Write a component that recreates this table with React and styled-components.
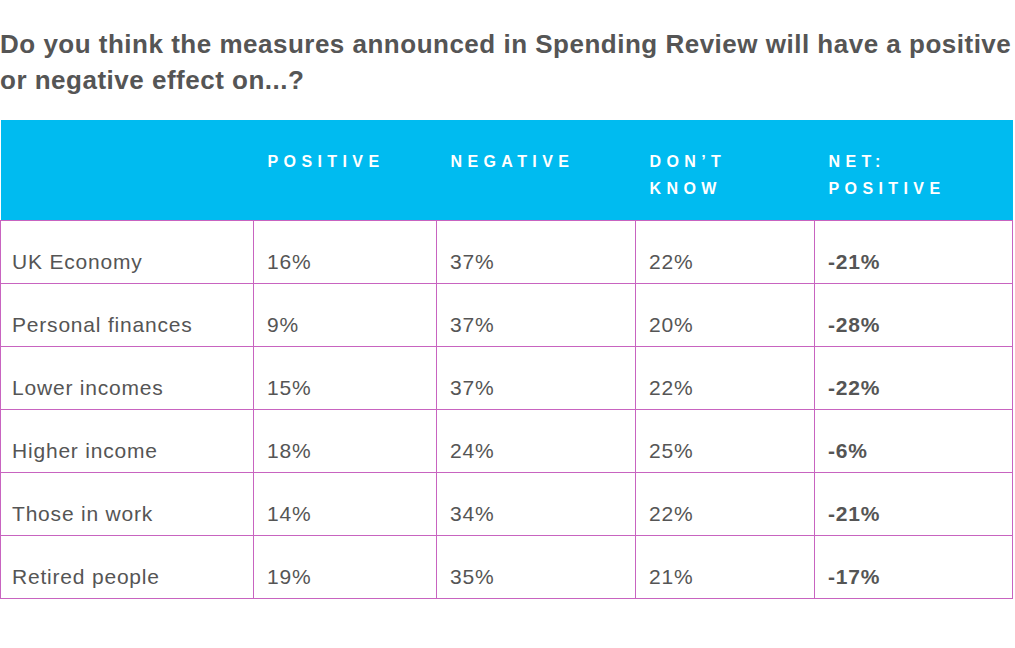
import styled, { createGlobalStyle } from "styled-components";

const GlobalStyle = createGlobalStyle`
  body {
    margin: 0;
    background: #ffffff;
    font-family: "Liberation Sans", Arial, sans-serif;
  }
`;

const rows = [
  { label: "UK Economy", positive: "16%", negative: "37%", dontKnow: "22%", net: "-21%" },
  { label: "Personal finances", positive: "9%", negative: "37%", dontKnow: "20%", net: "-28%" },
  { label: "Lower incomes", positive: "15%", negative: "37%", dontKnow: "22%", net: "-22%" },
  { label: "Higher income", positive: "18%", negative: "24%", dontKnow: "25%", net: "-6%" },
  { label: "Those in work", positive: "14%", negative: "34%", dontKnow: "22%", net: "-21%" },
  { label: "Retired people", positive: "19%", negative: "35%", dontKnow: "21%", net: "-17%" },
];

export default function App() {
  return (
    <Page>
      <GlobalStyle />
      <Title>
        Do you think the measures announced in Spending Review will have a positive or negative effect on...?
      </Title>
      <Table>
        <colgroup>
          <col style={{ width: 253 }} />
          <col style={{ width: 183 }} />
          <col style={{ width: 199 }} />
          <col style={{ width: 179 }} />
          <col />
        </colgroup>
        <thead>
          <tr>
            <HeadCell />
            <HeadCell>POSITIVE</HeadCell>
            <HeadCell>NEGATIVE</HeadCell>
            <HeadCell>DON’T<br />KNOW</HeadCell>
            <HeadCell>NET:<br />POSITIVE</HeadCell>
          </tr>
        </thead>
        <tbody>
          {rows.map((r) => (
            <tr key={r.label}>
              <Cell $first>{r.label}</Cell>
              <Cell>{r.positive}</Cell>
              <Cell>{r.negative}</Cell>
              <Cell>{r.dontKnow}</Cell>
              <Cell $bold>{r.net}</Cell>
            </tr>
          ))}
        </tbody>
      </Table>
    </Page>
  );
}

const Page = styled.div`
  width: 1015px;
  padding-top: 26px;
`;

const Title = styled.h1`
  margin: 0 0 22px 0;
  padding-right: 2px;
  font-family: "Liberation Sans", Arial, sans-serif;
  font-size: 26px;
  line-height: 36px;
  font-weight: 700;
  letter-spacing: 0.5px;
  color: #555555;
`;

const Table = styled.table`
  width: 1013px;
  border-collapse: collapse;
  table-layout: fixed;
`;

const HeadCell = styled.th`
  height: 100px;
  padding: 28px 14px 0 14px;
  background: #00bbf0;
  color: #ffffff;
  text-align: left;
  vertical-align: top;
  font-family: "Liberation Sans", Arial, sans-serif;
  font-size: 16px;
  line-height: 27px;
  font-weight: 700;
  letter-spacing: 5.4px;
  box-sizing: border-box;
`;

const Cell = styled.td`
  height: 63px;
  padding: 0 0 9px ${({ $first }) => ($first ? "11px" : "13px")};
  border: 1px solid #c864c0;
  vertical-align: bottom;
  font-family: "Liberation Sans", Arial, sans-serif;
  font-size: 21px;
  line-height: 24px;
  font-weight: ${({ $bold }) => ($bold ? 700 : 400)};
  letter-spacing: 0.8px;
  color: #555555;
  box-sizing: border-box;
`;
